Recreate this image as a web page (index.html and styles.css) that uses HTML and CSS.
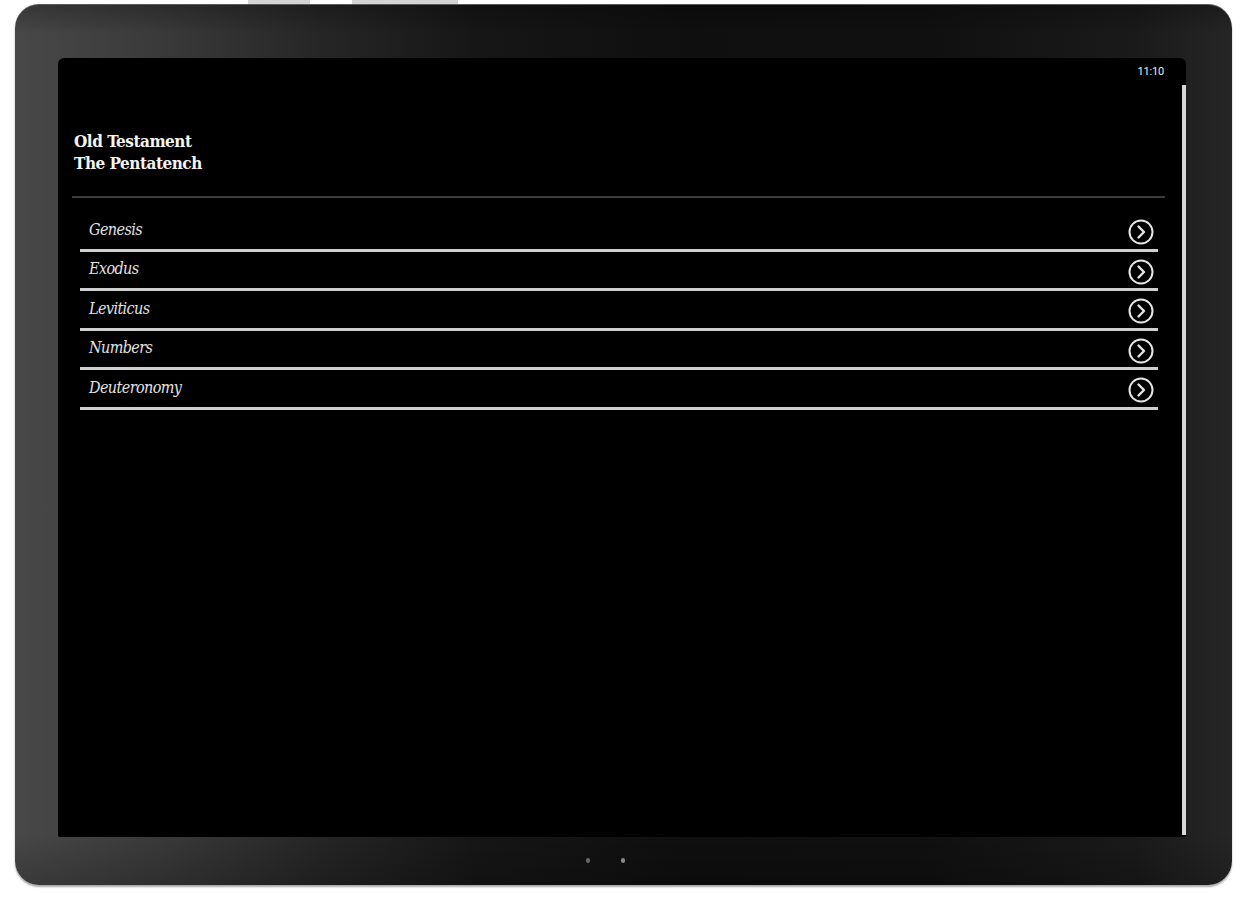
FILE: index.html
```html
<!DOCTYPE html>
<html>
<head>
<meta charset="utf-8">
<link rel="stylesheet" href="styles.css">
</head>
<body>
<div class="stage">
  <div class="tabs"><span class="tab t1"></span><span class="tab t2"></span></div>
  <div class="device">
    <div class="screen">
      <div class="main">
        <div class="status"><span class="time">11:10</span></div>
        <div class="title">
          <div>Old Testament</div>
          <div>The Pentatench</div>
        </div>
        <div class="divider"></div>
        <ul class="books">
          <li class="book"><span class="name">Genesis</span><svg class="go" viewBox="0 0 28 28"><circle cx="14" cy="14" r="11.5"/><path d="M11.5 8.5 L17 14 L11.5 19.5"/></svg></li>
          <li class="book"><span class="name">Exodus</span><svg class="go" viewBox="0 0 28 28"><circle cx="14" cy="14" r="11.5"/><path d="M11.5 8.5 L17 14 L11.5 19.5"/></svg></li>
          <li class="book"><span class="name">Leviticus</span><svg class="go" viewBox="0 0 28 28"><circle cx="14" cy="14" r="11.5"/><path d="M11.5 8.5 L17 14 L11.5 19.5"/></svg></li>
          <li class="book"><span class="name">Numbers</span><svg class="go" viewBox="0 0 28 28"><circle cx="14" cy="14" r="11.5"/><path d="M11.5 8.5 L17 14 L11.5 19.5"/></svg></li>
          <li class="book"><span class="name">Deuteronomy</span><svg class="go" viewBox="0 0 28 28"><circle cx="14" cy="14" r="11.5"/><path d="M11.5 8.5 L17 14 L11.5 19.5"/></svg></li>
        </ul>
      </div>
      <div class="scrollbar"></div>
    </div>
    <div class="navkeys"><span class="key"></span><span class="key k2"></span></div>
  </div>
</div>
</body>
</html>
```
FILE: styles.css
```css
html, body {
  margin: 0;
  padding: 0;
  background: #ffffff;
}
.stage {
  width: 1249px;
  height: 900px;
  position: relative;
  padding: 4px 17px 0 15px;
  box-sizing: border-box;
}
.tabs {
  position: absolute;
  top: 0;
  left: 0;
  width: 100%;
  height: 6px;
}
.tab {
  position: absolute;
  top: 0;
  height: 5px;
  background: #d4d4d4;
}
.tab.t1 { left: 248px; width: 62px; }
.tab.t2 { left: 352px; width: 106px; }
.device {
  position: relative;
  width: 1217px;
  height: 881px;
  box-sizing: border-box;
  border-radius: 24px;
  padding: 54px 46px 48px 43px;
  display: flex;
  background:
    linear-gradient(to bottom, rgba(0,0,0,0.25) 0, rgba(0,0,0,0) 30px, rgba(0,0,0,0) 830px, rgba(0,0,0,0.2) 881px),
    linear-gradient(to right, #484848 0%, #3a3a3a 12%, #262626 25%, #161616 38%, #0f0f0f 55%, #101010 75%, #1a1a1a 92%, #262626 100%);
  box-shadow: 0 2px 2px rgba(0,0,0,0.35), inset 0 1px 0 #5a5a5a;
}
.screen {
  flex: 1;
  background: #000;
  border-radius: 6px 6px 2px 2px;
  display: flex;
  overflow: hidden;
}
.main {
  flex: 1;
  padding: 0 17px 0 14px;
  display: flex;
  flex-direction: column;
}
.status {
  height: 27px;
  display: flex;
  justify-content: flex-end;
  align-items: center;
  padding-right: 1px;
}
.time {
  font-family: "Roboto", "Liberation Sans", sans-serif;
  font-size: 11px;
  color: #ececec;
  letter-spacing: -0.2px;
}
.title {
  margin-top: 45px;
  padding-left: 2px;
  font-family: "DejaVu Serif Condensed", "DejaVu Serif", serif;
  font-weight: bold;
  font-stretch: condensed;
  font-size: 17px;
  line-height: 22px;
  color: #f4f4f4;
  letter-spacing: -0.5px;
}
.divider {
  margin-top: 22px;
  height: 2px;
  background: #3c3c3c;
}
.books {
  list-style: none;
  margin: 14px 7px 0 8px;
  padding: 0;
}
.book {
  height: 36.5px;
  border-bottom: 3px solid #cfcfcf;
  display: flex;
  align-items: center;
  justify-content: space-between;
  padding: 0 3px 0 9px;
}
.name {
  font-family: "DejaVu Serif Condensed", "DejaVu Serif", serif;
  font-style: italic;
  font-stretch: condensed;
  font-size: 16px;
  color: #e2e2e2;
  letter-spacing: -0.6px;
  margin-top: -2px;
}
.go {
  width: 28px;
  height: 28px;
  margin-top: 4px;
  fill: none;
  stroke: #e6e6e6;
  stroke-width: 2;
}
.go path {
  stroke-width: 2.4;
  stroke-linecap: round;
  stroke-linejoin: round;
}
.scrollbar {
  width: 4px;
  margin: 27px 0 2px 0;
  background: #d8d8d8;
}
.navkeys {
  position: absolute;
  left: 0;
  bottom: 22px;
  width: 100%;
  display: flex;
  justify-content: center;
  gap: 31px;
  padding-right: 37px;
  box-sizing: border-box;
}
.key {
  width: 4px;
  height: 5px;
  border-radius: 2px;
  background: #666;
}
.key.k2 { background: #888; }
```
